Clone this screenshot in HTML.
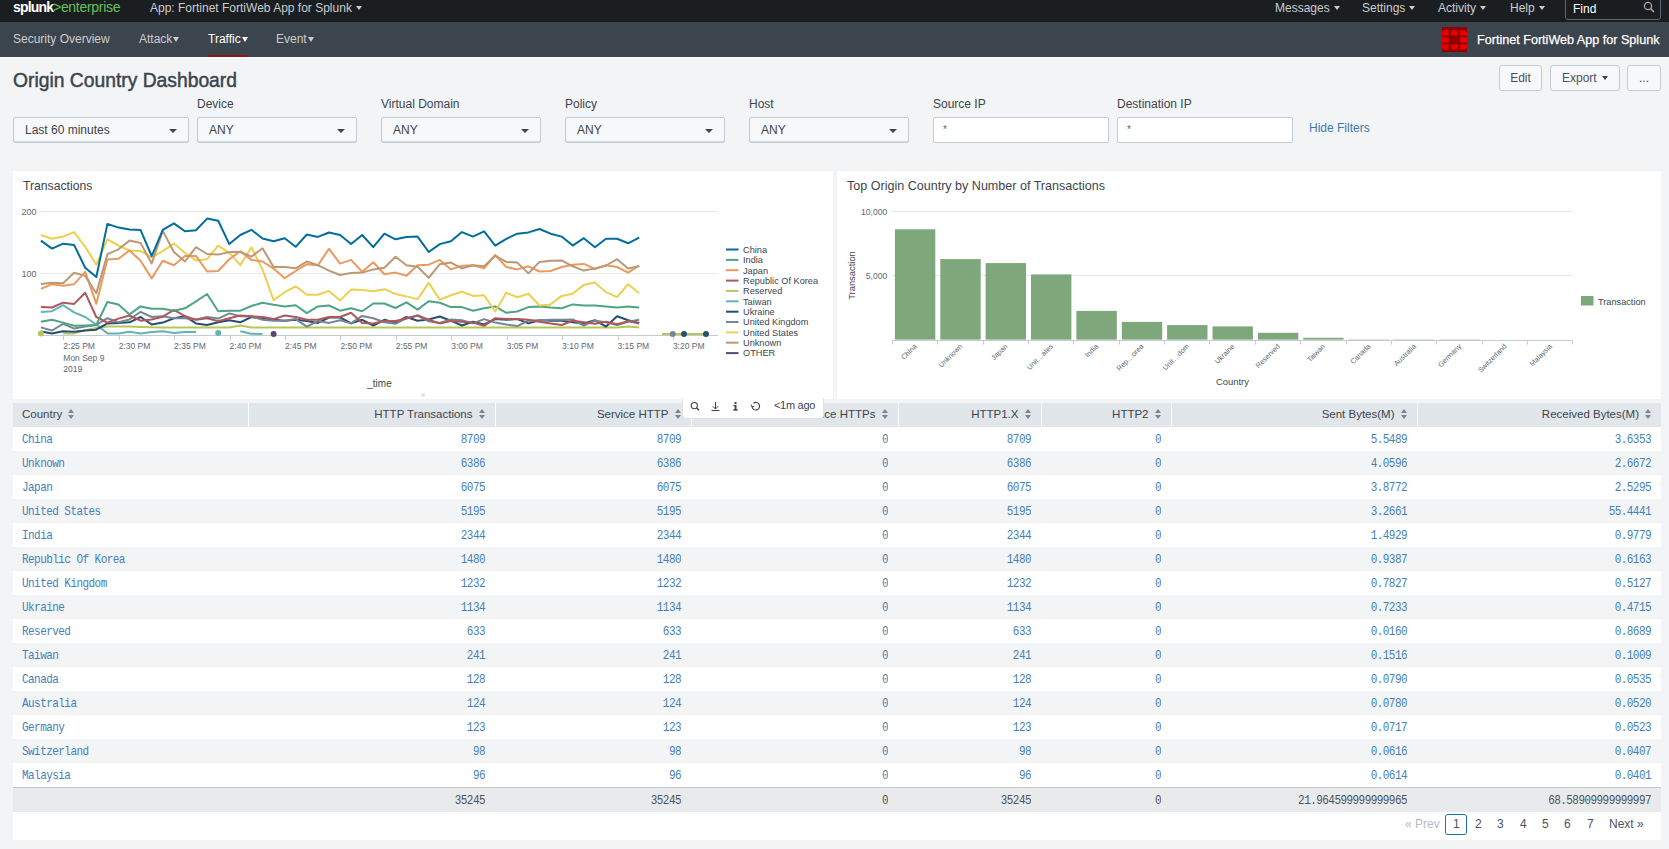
<!DOCTYPE html>
<html><head><meta charset="utf-8">
<style>
*{box-sizing:border-box;margin:0;padding:0}
html,body{width:1669px;height:849px;overflow:hidden;background:#f2f4f5;font-family:"Liberation Sans",sans-serif;color:#3c444d}
.a{position:absolute;white-space:nowrap}
#top{position:absolute;left:0;top:0;width:1669px;height:22px;background:#1a1e21}
#nav{position:absolute;left:0;top:22px;width:1669px;height:35px;background:#3c444d}
#navline{position:absolute;left:0;top:57px;width:1669px;height:1px;background:#fff}
.tt{color:#ccc;font-size:12px;top:1px}
.car{display:inline-block;width:0;height:0;border-left:3.3px solid transparent;border-right:3.3px solid transparent;border-top:4.5px solid currentColor;vertical-align:middle;margin-left:4px;position:relative;top:-1px}
.nv{color:#ccc;font-size:12px;top:32px}
.nv .car{border-left-width:3.7px;border-right-width:3.7px;border-top-width:5px;top:0}
.lbl{font-size:12px;top:97px;color:#3c444d}
.dd{position:absolute;top:117px;height:26px;border:1px solid #c3cbd4;border-radius:2px;background:#f7f8fa;font-size:12px;color:#3c444d;padding:5px 0 0 11px;box-shadow:inset 0 -1px 0 #d6dbe1}
.dd i{position:absolute;right:11px;top:11px;width:0;height:0;border-left:4px solid transparent;border-right:4px solid transparent;border-top:4px solid #3c444d}
.ti{position:absolute;top:117px;height:26px;border:1px solid #c3cbd4;border-radius:2px;background:#fff;font-size:10px;color:#5c6773;padding:6px 0 0 9px}
.btn{position:absolute;top:65px;height:26px;border:1px solid #c3cbd4;border-radius:3px;background:#f7f8fa;font-size:12px;color:#4a535c;text-align:center;padding-top:5px}
.panel{position:absolute;background:#fff}
.ptitle{font-size:12px;color:#3c444d}
table{position:absolute;left:13px;top:403px;width:1648px;border-collapse:collapse;table-layout:fixed}
th{height:24px;background:#e1e6eb;font-weight:normal;font-size:11.5px;color:#3c444d;text-align:right;padding:0 10px 2px 0;border-left:1px solid #fff;white-space:nowrap;overflow:hidden}
th:first-child{text-align:left;padding-left:9px;border-left:none}
td{height:24px;padding-top:2px !important;font-family:"Liberation Mono",monospace;font-size:11px;letter-spacing:-0.55px;color:#4680b8;text-align:right;padding:0 10px 0 0;white-space:nowrap}
td:first-child{text-align:left;padding-left:9px}
td i{font-style:normal;display:inline-block;transform:scaleY(1.13);transform-origin:50% 70%}
tbody tr:nth-child(even) td{background:#f2f4f5}
tbody tr:nth-child(odd) td{background:#fff}
tfoot td{background:#e9eaeb;color:#4a535c;border-top:1px solid #c8c8c8;height:25px}
.srt{display:inline-block;width:6px;height:10px;position:relative;margin-left:6px;top:1px}
.srt:before{content:"";position:absolute;left:0;top:0;border-left:3px solid transparent;border-right:3px solid transparent;border-bottom:4px solid #7b8591}
.srt:after{content:"";position:absolute;left:0;top:6px;border-left:3px solid transparent;border-right:3px solid transparent;border-top:4px solid #7b8591}
</style></head><body>
<div id="top"></div>
<div id="nav"></div>
<div id="navline"></div>

<!-- top bar -->
<div class="a" style="left:13px;top:-1.5px;font-size:14px;font-weight:bold;color:#fff;letter-spacing:-0.8px">splunk</div><div class="a" style="left:53px;top:-1.5px;font-size:14px;color:#65c15a;letter-spacing:-0.3px">&gt;enterprise</div>
<div class="a tt" style="left:150px">App: Fortinet FortiWeb App for Splunk<span class="car"></span></div>
<div class="a tt" style="left:1275px">Messages<span class="car"></span></div>
<div class="a tt" style="left:1362px">Settings<span class="car"></span></div>
<div class="a tt" style="left:1438px">Activity<span class="car"></span></div>
<div class="a tt" style="left:1510px">Help<span class="car"></span></div>
<div class="a" style="left:1565px;top:-4px;width:96px;height:24px;border:1px solid #5c6773;border-radius:3px;background:#1a1c20"></div><svg class="a" style="left:1640px;top:0" width="20" height="16"><circle cx="8" cy="6" r="3.6" fill="none" stroke="#a0a8b0" stroke-width="1.3"/><line x1="10.6" y1="8.6" x2="14" y2="12" stroke="#a0a8b0" stroke-width="1.6"/></svg>
<div class="a" style="left:1573px;top:2px;font-size:12px;color:#fff">Find</div>

<!-- nav -->
<div class="a nv" style="left:13px">Security Overview</div>
<div class="a nv" style="left:139px">Attack<span class="car" style="margin-left:1px"></span></div>
<div class="a nv" style="left:208px;color:#fff">Traffic<span class="car" style="margin-left:1px"></span></div>
<div class="a" style="left:208px;top:55px;width:39px;height:2px;background:#8f1518"></div>
<div class="a nv" style="left:276px">Event<span class="car" style="margin-left:1px"></span></div>

<svg class="a" style="left:1442px;top:27px" width="25" height="25">
<rect width="25" height="25" fill="#8c0000"/>
<path d="M0,5.5 Q0,3.3 2.2,3.3 H6.6 V8.5 H0 Z" fill="#e80000"/>
<rect x="9.2" y="3.3" width="6.7" height="5.2" fill="#e80000"/>
<path d="M18,3.3 H22.8 Q25,3.3 25,5.5 V8.5 H18 Z" fill="#e80000"/>
<rect x="0" y="10.2" width="6.6" height="5.4" fill="#e80000"/>
<rect x="18" y="10.2" width="7" height="5.4" fill="#e80000"/>
<path d="M0,17.3 H6.6 V22.4 H2.2 Q0,22.4 0,20.2 Z" fill="#e80000"/>
<rect x="9.2" y="17.3" width="6.7" height="5.1" fill="#e80000"/>
<path d="M18,17.3 H25 V20.2 Q25,22.4 22.8,22.4 H18 Z" fill="#e80000"/>
</svg>
<div class="a" style="left:1477px;top:32.5px;font-size:12.6px;color:#fff;-webkit-text-stroke:0.25px #fff">Fortinet FortiWeb App for Splunk</div>

<!-- title -->
<div class="a" style="left:13px;top:69.5px;font-size:19.3px;color:#3c444d;-webkit-text-stroke:0.45px #3c444d">Origin Country Dashboard</div>
<div class="btn" style="left:1499px;width:43px">Edit</div>
<div class="btn" style="left:1550px;width:70px;text-align:left;padding-left:11px">Export<i style="position:absolute;right:11px;top:10px;border-left:3.5px solid transparent;border-right:3.5px solid transparent;border-top:4px solid #3c444d"></i></div>
<div class="btn" style="left:1627px;width:34px">...</div>

<!-- filters -->
<div class="a lbl" style="left:197px">Device</div>
<div class="a lbl" style="left:381px">Virtual Domain</div>
<div class="a lbl" style="left:565px">Policy</div>
<div class="a lbl" style="left:749px">Host</div>
<div class="a lbl" style="left:933px">Source IP</div>
<div class="a lbl" style="left:1117px">Destination IP</div>
<div class="dd" style="left:13px;width:176px">Last 60 minutes<i></i></div>
<div class="dd" style="left:197px;width:160px">ANY<i></i></div>
<div class="dd" style="left:381px;width:160px">ANY<i></i></div>
<div class="dd" style="left:565px;width:160px">ANY<i></i></div>
<div class="dd" style="left:749px;width:160px">ANY<i></i></div>
<div class="ti" style="left:933px;width:176px">*</div>
<div class="ti" style="left:1117px;width:176px">*</div>
<div class="a" style="left:1309px;top:121px;font-size:12px;color:#3b79b4">Hide Filters</div>

<!-- panels -->
<div class="panel" style="left:13px;top:171px;width:820px;height:228px"></div>
<div class="panel" style="left:837px;top:171px;width:824px;height:228px"></div>
<div class="a ptitle" style="left:23px;top:179px;font-size:12.2px">Transactions</div>
<div class="a ptitle" style="left:847px;top:179px;font-size:12.55px">Top Origin Country by Number of Transactions</div>

<svg class="a" style="left:0;top:0" width="1669" height="400">
<line x1="40.5" y1="211.5" x2="718" y2="211.5" stroke="#e5e8ec" stroke-width="1"/>
<line x1="40.5" y1="273.5" x2="718" y2="273.5" stroke="#e5e8ec" stroke-width="1"/>
<line x1="40.5" y1="335.5" x2="718" y2="335.5" stroke="#c3cbd4" stroke-width="1"/>
<line x1="63.5" y1="335" x2="63.5" y2="340" stroke="#c3cbd4" stroke-width="1"/>
<text x="63.3" y="349" font-size="8.5" fill="#5c6773">2:25 PM</text>
<line x1="119.5" y1="335" x2="119.5" y2="340" stroke="#c3cbd4" stroke-width="1"/>
<text x="118.7" y="349" font-size="8.5" fill="#5c6773">2:30 PM</text>
<line x1="174.5" y1="335" x2="174.5" y2="340" stroke="#c3cbd4" stroke-width="1"/>
<text x="174.1" y="349" font-size="8.5" fill="#5c6773">2:35 PM</text>
<line x1="230.5" y1="335" x2="230.5" y2="340" stroke="#c3cbd4" stroke-width="1"/>
<text x="229.6" y="349" font-size="8.5" fill="#5c6773">2:40 PM</text>
<line x1="285.5" y1="335" x2="285.5" y2="340" stroke="#c3cbd4" stroke-width="1"/>
<text x="285.0" y="349" font-size="8.5" fill="#5c6773">2:45 PM</text>
<line x1="340.5" y1="335" x2="340.5" y2="340" stroke="#c3cbd4" stroke-width="1"/>
<text x="340.4" y="349" font-size="8.5" fill="#5c6773">2:50 PM</text>
<line x1="396.5" y1="335" x2="396.5" y2="340" stroke="#c3cbd4" stroke-width="1"/>
<text x="395.8" y="349" font-size="8.5" fill="#5c6773">2:55 PM</text>
<line x1="451.5" y1="335" x2="451.5" y2="340" stroke="#c3cbd4" stroke-width="1"/>
<text x="451.2" y="349" font-size="8.5" fill="#5c6773">3:00 PM</text>
<line x1="507.5" y1="335" x2="507.5" y2="340" stroke="#c3cbd4" stroke-width="1"/>
<text x="506.7" y="349" font-size="8.5" fill="#5c6773">3:05 PM</text>
<line x1="562.5" y1="335" x2="562.5" y2="340" stroke="#c3cbd4" stroke-width="1"/>
<text x="562.1" y="349" font-size="8.5" fill="#5c6773">3:10 PM</text>
<line x1="618.5" y1="335" x2="618.5" y2="340" stroke="#c3cbd4" stroke-width="1"/>
<text x="617.5" y="349" font-size="8.5" fill="#5c6773">3:15 PM</text>
<line x1="673.5" y1="335" x2="673.5" y2="340" stroke="#c3cbd4" stroke-width="1"/>
<text x="672.9" y="349" font-size="8.5" fill="#5c6773">3:20 PM</text>
<text x="63.3" y="361" font-size="8.5" fill="#5c6773">Mon Sep 9</text>
<text x="63.3" y="372" font-size="8.5" fill="#5c6773">2019</text>
<text x="36.5" y="215" font-size="9" fill="#5c6773" text-anchor="end">200</text>
<text x="36.5" y="277" font-size="9" fill="#5c6773" text-anchor="end">100</text>
<text x="379.5" y="386.5" font-size="10" fill="#3c444d" text-anchor="middle">_time</text>
<polyline points="63.1,333.4 74.1,333.4 85.2,330.3 96.3,327.9 107.4,326.6 118.5,326.6 129.5,326.6 140.6,326.9 151.7,327.3 162.8,327.4 173.9,327.4 184.9,327.4 196.0,327.4 207.1,327.4 218.2,327.4 229.3,327.4 240.3,325.4 251.4,327.4 262.5,327.4 273.6,327.4 284.7,327.4 295.7,327.4 306.8,327.4 317.9,327.4 329.0,327.4 340.1,327.4 351.1,327.4 362.2,327.4 373.3,327.4 384.4,327.4 395.5,327.4 406.5,327.4 417.6,327.4 428.7,327.4 439.8,327.4 450.9,327.4 461.9,327.4 473.0,327.4 484.1,327.4 495.2,327.4 506.3,327.4 517.3,327.4 528.4,327.4 539.5,327.4 550.6,327.4 561.7,327.4 572.7,327.4 583.8,327.4 594.9,327.4 606.0,327.4 617.1,327.4 628.1,326.6 639.2,327.4" fill="none" stroke="#b6c75a" stroke-width="2" stroke-linejoin="round"/>
<polyline points="40.9,312.0 52.0,311.2 63.1,305.2 74.1,312.3 85.2,317.0 96.3,324.5 107.4,333.4 118.5,333.4 129.5,331.8 140.6,333.4 151.7,332.1 162.8,331.3 173.9,332.9 184.9,332.1 196.0,332.1" fill="none" stroke="#62b3b2" stroke-width="2" stroke-linejoin="round"/>
<polyline points="240.3,331.3 251.4,333.7 262.5,334.1" fill="none" stroke="#62b3b2" stroke-width="2" stroke-linejoin="round"/>
<polyline points="40.9,331.6 52.0,333.4 63.1,331.3 74.1,331.8 85.2,330.5 96.3,329.7 107.4,323.4 118.5,322.9 129.5,322.3 140.6,317.0 151.7,324.5 162.8,322.6 173.9,318.2 184.9,316.2 196.0,323.4 207.1,325.0 218.2,322.3 229.3,320.2 240.3,322.3 251.4,317.0 262.5,318.6 273.6,319.8 284.7,320.7 295.7,319.8 306.8,321.1 317.9,322.9 329.0,317.5 340.1,317.5 351.1,323.4 362.2,319.8 373.3,325.5 384.4,319.8 395.5,322.6 406.5,317.0 417.6,320.7 428.7,319.5 439.8,316.5 450.9,320.7 461.9,325.5 473.0,321.8 484.1,324.5 495.2,319.1 506.3,319.8 517.3,319.1 528.4,323.4 539.5,320.2 550.6,320.7 561.7,320.7 572.7,322.3 583.8,323.4 594.9,320.2 606.0,326.6 617.1,316.2 628.1,320.2 639.2,322.9" fill="none" stroke="#294e70" stroke-width="2" stroke-linejoin="round"/>
<polyline points="40.9,327.4 52.0,330.5 63.1,323.8 74.1,328.6 85.2,326.6 96.3,325.0 107.4,318.2 118.5,322.3 129.5,319.5 140.6,311.8 151.7,317.0 162.8,316.2 173.9,318.2 184.9,318.2 196.0,319.5 207.1,317.0 218.2,318.6 229.3,313.4 240.3,316.2 251.4,316.5 262.5,319.8 273.6,320.7 284.7,320.7 295.7,319.1 306.8,326.6 317.9,321.1 329.0,322.9 340.1,320.2 351.1,323.4 362.2,315.9 373.3,318.2 384.4,322.3 395.5,323.8 406.5,318.2 417.6,315.5 428.7,321.3 439.8,322.9 450.9,319.5 461.9,320.2 473.0,323.4 484.1,319.1 495.2,322.6 506.3,324.5 517.3,326.1 528.4,320.7 539.5,320.2 550.6,319.8 561.7,319.8 572.7,319.5 583.8,325.5 594.9,320.7 606.0,322.3 617.1,325.0 628.1,321.8 639.2,319.8" fill="none" stroke="#738795" stroke-width="2" stroke-linejoin="round"/>
<polyline points="40.9,307.1 52.0,307.5 63.1,302.7 74.1,303.9 85.2,292.8 96.3,317.0 107.4,322.6 118.5,318.6 129.5,315.5 140.6,320.7 151.7,319.5 162.8,316.7 173.9,309.9 184.9,316.2 196.0,319.8 207.1,318.2 218.2,321.1 229.3,318.2 240.3,315.5 251.4,316.2 262.5,317.0 273.6,319.1 284.7,315.5 295.7,317.0 306.8,319.8 317.9,319.8 329.0,317.0 340.1,317.0 351.1,312.8 362.2,322.9 373.3,323.4 384.4,321.1 395.5,321.1 406.5,318.6 417.6,315.5 428.7,319.8 439.8,323.4 450.9,321.1 461.9,321.8 473.0,322.6 484.1,325.8 495.2,318.2 506.3,319.1 517.3,319.1 528.4,319.8 539.5,321.8 550.6,323.4 561.7,325.0 572.7,320.7 583.8,322.3 594.9,323.8 606.0,321.8 617.1,324.2 628.1,321.1 639.2,323.4" fill="none" stroke="#af575a" stroke-width="2" stroke-linejoin="round"/>
<polyline points="40.9,321.8 52.0,319.8 63.1,322.6 74.1,325.8 85.2,325.5 96.3,325.0 107.4,302.0 118.5,304.4 129.5,314.4 140.6,306.4 151.7,308.7 162.8,308.7 173.9,310.7 184.9,308.3 196.0,301.3 207.1,294.0 218.2,311.2 229.3,310.7 240.3,310.7 251.4,306.0 262.5,302.7 273.6,304.8 284.7,306.4 295.7,305.2 306.8,313.1 317.9,306.4 329.0,305.5 340.1,310.7 351.1,308.3 362.2,311.2 373.3,303.5 384.4,303.5 395.5,308.0 406.5,302.3 417.6,309.6 428.7,301.2 439.8,302.7 450.9,307.1 461.9,307.1 473.0,310.7 484.1,308.3 495.2,306.4 506.3,312.8 517.3,311.5 528.4,307.1 539.5,306.4 550.6,307.5 561.7,308.3 572.7,304.4 583.8,305.5 594.9,305.5 606.0,306.4 617.1,307.5 628.1,306.4 639.2,307.5" fill="none" stroke="#4fa484" stroke-width="2" stroke-linejoin="round"/>
<polyline points="40.9,235.0 52.0,238.7 63.1,236.6 74.1,232.1 85.2,246.8 96.3,264.7 107.4,239.4 118.5,245.5 129.5,250.5 140.6,251.1 151.7,257.3 162.8,251.2 173.9,243.6 184.9,252.8 196.0,260.4 207.1,259.2 218.2,245.6 229.3,252.8 240.3,265.2 251.4,247.2 262.5,269.4 273.6,300.1 284.7,292.2 295.7,286.4 306.8,294.8 317.9,294.8 329.0,290.9 340.1,300.4 351.1,289.6 362.2,290.1 373.3,291.2 384.4,289.2 395.5,294.0 406.5,296.4 417.6,299.1 428.7,282.9 439.8,299.6 450.9,295.3 461.9,291.7 473.0,295.9 484.1,295.3 495.2,311.5 506.3,292.8 517.3,297.2 528.4,293.7 539.5,305.5 550.6,304.4 561.7,295.9 572.7,293.7 583.8,284.9 594.9,282.6 606.0,292.2 617.1,297.2 628.1,284.2 639.2,293.3" fill="none" stroke="#edd051" stroke-width="2" stroke-linejoin="round"/>
<polyline points="40.9,288.9 52.0,284.2 63.1,285.8 74.1,284.2 85.2,271.9 96.3,303.7 107.4,259.5 118.5,258.8 129.5,250.5 140.6,260.7 151.7,278.4 162.8,260.7 173.9,265.2 184.9,255.9 196.0,255.9 207.1,271.5 218.2,271.0 229.3,259.2 240.3,251.2 251.4,259.9 262.5,261.5 273.6,268.6 284.7,278.2 295.7,271.0 306.8,264.2 317.9,265.2 329.0,248.8 340.1,263.6 351.1,259.9 362.2,271.8 373.3,262.3 384.4,274.2 395.5,272.6 406.5,275.8 417.6,265.2 428.7,264.7 439.8,259.9 450.9,269.4 461.9,265.8 473.0,265.2 484.1,268.3 495.2,255.1 506.3,267.0 517.3,269.4 528.4,266.3 539.5,271.5 550.6,271.0 561.7,267.0 572.7,264.7 583.8,263.9 594.9,268.9 606.0,265.2 617.1,267.0 628.1,272.6 639.2,265.5" fill="none" stroke="#ec9960" stroke-width="2" stroke-linejoin="round"/>
<polyline points="40.9,283.9 52.0,282.7 63.1,283.3 74.1,272.8 85.2,275.9 96.3,293.2 107.4,254.2 118.5,249.3 129.5,240.6 140.6,243.1 151.7,263.5 162.8,230.9 173.9,252.0 184.9,261.5 196.0,247.2 207.1,254.0 218.2,254.6 229.3,252.0 240.3,252.0 251.4,256.7 262.5,248.3 273.6,267.0 284.7,267.0 295.7,268.3 306.8,261.5 317.9,265.2 329.0,270.6 340.1,275.0 351.1,273.1 362.2,272.6 373.3,269.4 384.4,267.8 395.5,256.7 406.5,265.2 417.6,266.7 428.7,277.9 439.8,264.2 450.9,262.6 461.9,268.3 473.0,265.2 484.1,266.3 495.2,255.6 506.3,261.9 517.3,262.6 528.4,273.4 539.5,261.9 550.6,260.7 561.7,260.4 572.7,266.3 583.8,270.6 594.9,268.6 606.0,265.5 617.1,259.2 628.1,268.6 639.2,266.3" fill="none" stroke="#bd9872" stroke-width="2" stroke-linejoin="round"/>
<polyline points="40.9,240.6 52.0,248.6 63.1,243.7 74.1,244.9 85.2,267.8 96.3,277.1 107.4,223.9 118.5,227.6 129.5,229.5 140.6,230.1 151.7,256.1 162.8,229.8 173.9,223.4 184.9,231.3 196.0,230.3 207.1,218.6 218.2,220.8 229.3,244.1 240.3,235.0 251.4,229.8 262.5,238.5 273.6,241.3 284.7,238.2 295.7,246.8 306.8,234.5 317.9,236.9 329.0,232.5 340.1,235.0 351.1,244.1 362.2,235.0 373.3,247.2 384.4,233.7 395.5,239.3 406.5,236.9 417.6,236.6 428.7,252.0 439.8,244.1 450.9,241.3 461.9,232.1 473.0,236.6 484.1,231.3 495.2,245.6 506.3,238.8 517.3,233.7 528.4,232.4 539.5,229.0 550.6,233.7 561.7,236.6 572.7,245.6 583.8,238.2 594.9,247.2 606.0,238.8 617.1,238.8 628.1,243.3 639.2,237.7" fill="none" stroke="#006d9c" stroke-width="2" stroke-linejoin="round"/>
<circle cx="40.9" cy="333.5" r="3" fill="#b6c75a"/>
<circle cx="218.2" cy="333" r="3" fill="#62b3b2"/>
<circle cx="273.6" cy="334" r="3" fill="#5a4575"/>
<line x1="662" y1="334" x2="708" y2="334" stroke="#b6c75a" stroke-width="2"/>
<circle cx="672.7" cy="334" r="3" fill="#738795"/>
<circle cx="684" cy="334" r="3" fill="#294e70"/>
<circle cx="706" cy="334" r="3" fill="#294e70"/>
<line x1="726" y1="249.5" x2="738.5" y2="249.5" stroke="#006d9c" stroke-width="2"/>
<text x="743" y="252.8" font-size="9.2" fill="#3c444d">China</text>
<line x1="726" y1="259.9" x2="738.5" y2="259.9" stroke="#4fa484" stroke-width="2"/>
<text x="743" y="263.2" font-size="9.2" fill="#3c444d">India</text>
<line x1="726" y1="270.2" x2="738.5" y2="270.2" stroke="#ec9960" stroke-width="2"/>
<text x="743" y="273.5" font-size="9.2" fill="#3c444d">Japan</text>
<line x1="726" y1="280.6" x2="738.5" y2="280.6" stroke="#af575a" stroke-width="2"/>
<text x="743" y="283.9" font-size="9.2" fill="#3c444d">Republic Of Korea</text>
<line x1="726" y1="290.9" x2="738.5" y2="290.9" stroke="#b6c75a" stroke-width="2"/>
<text x="743" y="294.2" font-size="9.2" fill="#3c444d">Reserved</text>
<line x1="726" y1="301.3" x2="738.5" y2="301.3" stroke="#62b3b2" stroke-width="2"/>
<text x="743" y="304.6" font-size="9.2" fill="#3c444d">Taiwan</text>
<line x1="726" y1="311.7" x2="738.5" y2="311.7" stroke="#294e70" stroke-width="2"/>
<text x="743" y="315.0" font-size="9.2" fill="#3c444d">Ukraine</text>
<line x1="726" y1="322.0" x2="738.5" y2="322.0" stroke="#738795" stroke-width="2"/>
<text x="743" y="325.3" font-size="9.2" fill="#3c444d">United Kingdom</text>
<line x1="726" y1="332.4" x2="738.5" y2="332.4" stroke="#edd051" stroke-width="2"/>
<text x="743" y="335.7" font-size="9.2" fill="#3c444d">United States</text>
<line x1="726" y1="342.7" x2="738.5" y2="342.7" stroke="#bd9872" stroke-width="2"/>
<text x="743" y="346.0" font-size="9.2" fill="#3c444d">Unknown</text>
<line x1="726" y1="353.1" x2="738.5" y2="353.1" stroke="#5a4575" stroke-width="2"/>
<text x="743" y="356.4" font-size="9.2" fill="#3c444d">OTHER</text>
<line x1="892" y1="211.5" x2="1573" y2="211.5" stroke="#e5e8ec" stroke-width="1"/>
<line x1="892" y1="275.5" x2="1573" y2="275.5" stroke="#e5e8ec" stroke-width="1"/>
<rect x="894.9" y="229.3" width="40.4" height="110.3" fill="#7ea77b"/>
<rect x="940.3" y="259.1" width="40.4" height="80.5" fill="#7ea77b"/>
<rect x="985.6" y="263.1" width="40.4" height="76.5" fill="#7ea77b"/>
<rect x="1031.0" y="274.4" width="40.4" height="65.2" fill="#7ea77b"/>
<rect x="1076.4" y="310.9" width="40.4" height="28.7" fill="#7ea77b"/>
<rect x="1121.8" y="321.9" width="40.4" height="17.7" fill="#7ea77b"/>
<rect x="1167.1" y="325.1" width="40.4" height="14.5" fill="#7ea77b"/>
<rect x="1212.5" y="326.4" width="40.4" height="13.2" fill="#7ea77b"/>
<rect x="1257.9" y="332.8" width="40.4" height="6.8" fill="#7ea77b"/>
<rect x="1303.2" y="337.8" width="40.4" height="1.8" fill="#7ea77b"/>
<rect x="1348.6" y="339.3" width="40.4" height="0.3" fill="#7ea77b"/>
<rect x="1394.0" y="339.3" width="40.4" height="0.3" fill="#7ea77b"/>
<rect x="1439.3" y="339.3" width="40.4" height="0.3" fill="#7ea77b"/>
<rect x="1484.7" y="339.6" width="40.4" height="-0.0" fill="#7ea77b"/>
<rect x="1530.1" y="339.7" width="40.4" height="-0.1" fill="#7ea77b"/>
<line x1="892" y1="340.5" x2="1573" y2="340.5" stroke="#c3cbd4" stroke-width="1"/>
<line x1="892.5" y1="340" x2="892.5" y2="344.5" stroke="#c3cbd4" stroke-width="1"/>
<line x1="937.5" y1="340" x2="937.5" y2="344.5" stroke="#c3cbd4" stroke-width="1"/>
<line x1="983.5" y1="340" x2="983.5" y2="344.5" stroke="#c3cbd4" stroke-width="1"/>
<line x1="1028.5" y1="340" x2="1028.5" y2="344.5" stroke="#c3cbd4" stroke-width="1"/>
<line x1="1073.5" y1="340" x2="1073.5" y2="344.5" stroke="#c3cbd4" stroke-width="1"/>
<line x1="1119.5" y1="340" x2="1119.5" y2="344.5" stroke="#c3cbd4" stroke-width="1"/>
<line x1="1164.5" y1="340" x2="1164.5" y2="344.5" stroke="#c3cbd4" stroke-width="1"/>
<line x1="1209.5" y1="340" x2="1209.5" y2="344.5" stroke="#c3cbd4" stroke-width="1"/>
<line x1="1255.5" y1="340" x2="1255.5" y2="344.5" stroke="#c3cbd4" stroke-width="1"/>
<line x1="1300.5" y1="340" x2="1300.5" y2="344.5" stroke="#c3cbd4" stroke-width="1"/>
<line x1="1346.5" y1="340" x2="1346.5" y2="344.5" stroke="#c3cbd4" stroke-width="1"/>
<line x1="1391.5" y1="340" x2="1391.5" y2="344.5" stroke="#c3cbd4" stroke-width="1"/>
<line x1="1436.5" y1="340" x2="1436.5" y2="344.5" stroke="#c3cbd4" stroke-width="1"/>
<line x1="1482.5" y1="340" x2="1482.5" y2="344.5" stroke="#c3cbd4" stroke-width="1"/>
<line x1="1527.5" y1="340" x2="1527.5" y2="344.5" stroke="#c3cbd4" stroke-width="1"/>
<line x1="1572.5" y1="340" x2="1572.5" y2="344.5" stroke="#c3cbd4" stroke-width="1"/>
<text x="0" y="0" font-size="7.2" fill="#5c6773" text-anchor="end" transform="translate(917.4,346.8) rotate(-45)">China</text>
<text x="0" y="0" font-size="7.2" fill="#5c6773" text-anchor="end" transform="translate(962.8,346.8) rotate(-45)">Unknown</text>
<text x="0" y="0" font-size="7.2" fill="#5c6773" text-anchor="end" transform="translate(1008.1,346.8) rotate(-45)">Japan</text>
<text x="0" y="0" font-size="7.2" fill="#5c6773" text-anchor="end" transform="translate(1053.5,346.8) rotate(-45)">Unit…ates</text>
<text x="0" y="0" font-size="7.2" fill="#5c6773" text-anchor="end" transform="translate(1098.9,346.8) rotate(-45)">India</text>
<text x="0" y="0" font-size="7.2" fill="#5c6773" text-anchor="end" transform="translate(1144.2,346.8) rotate(-45)">Rep…orea</text>
<text x="0" y="0" font-size="7.2" fill="#5c6773" text-anchor="end" transform="translate(1189.6,346.8) rotate(-45)">Unit…dom</text>
<text x="0" y="0" font-size="7.2" fill="#5c6773" text-anchor="end" transform="translate(1235.0,346.8) rotate(-45)">Ukraine</text>
<text x="0" y="0" font-size="7.2" fill="#5c6773" text-anchor="end" transform="translate(1280.3,346.8) rotate(-45)">Reserved</text>
<text x="0" y="0" font-size="7.2" fill="#5c6773" text-anchor="end" transform="translate(1325.7,346.8) rotate(-45)">Taiwan</text>
<text x="0" y="0" font-size="7.2" fill="#5c6773" text-anchor="end" transform="translate(1371.1,346.8) rotate(-45)">Canada</text>
<text x="0" y="0" font-size="7.2" fill="#5c6773" text-anchor="end" transform="translate(1416.5,346.8) rotate(-45)">Australia</text>
<text x="0" y="0" font-size="7.2" fill="#5c6773" text-anchor="end" transform="translate(1461.8,346.8) rotate(-45)">Germany</text>
<text x="0" y="0" font-size="7.2" fill="#5c6773" text-anchor="end" transform="translate(1507.2,346.8) rotate(-45)">Switzerland</text>
<text x="0" y="0" font-size="7.2" fill="#5c6773" text-anchor="end" transform="translate(1552.6,346.8) rotate(-45)">Malaysia</text>
<text x="887.3" y="215" font-size="8.6" fill="#5c6773" text-anchor="end">10,000</text>
<text x="887.3" y="279" font-size="8.6" fill="#5c6773" text-anchor="end">5,000</text>
<text x="0" y="0" font-size="9.4" fill="#3c444d" text-anchor="middle" transform="translate(855,275.5) rotate(-90)">Transaction</text>
<text x="1232.5" y="385" font-size="9.4" fill="#3c444d" text-anchor="middle">Country</text>
<rect x="1581" y="296" width="12.5" height="9.5" fill="#7ea77b"/>
<text x="1598" y="304.8" font-size="9.2" fill="#3c444d">Transaction</text>
</svg>

<!-- table panel bg -->
<div class="panel" style="left:13px;top:403px;width:1648px;height:437px"></div>
<table>
<colgroup><col style="width:235px"><col style="width:247px"><col style="width:196px"><col style="width:207px"><col style="width:143px"><col style="width:130px"><col style="width:246px"><col style="width:244px"></colgroup>
<thead><tr><th>Country<span class="srt"></span></th><th>HTTP Transactions<span class="srt"></span></th><th>Service HTTP<span class="srt"></span></th><th>Service HTTPs<span class="srt"></span></th><th>HTTP1.X<span class="srt"></span></th><th>HTTP2<span class="srt"></span></th><th>Sent Bytes(M)<span class="srt"></span></th><th>Received Bytes(M)<span class="srt"></span></th></tr></thead>
<tbody>
<tr><td><i>China</i></td><td><i>8709</i></td><td><i>8709</i></td><td><i>0</i></td><td><i>8709</i></td><td><i>0</i></td><td><i>5.5489</i></td><td><i>3.6353</i></td></tr>
<tr><td><i>Unknown</i></td><td><i>6386</i></td><td><i>6386</i></td><td><i>0</i></td><td><i>6386</i></td><td><i>0</i></td><td><i>4.0596</i></td><td><i>2.6672</i></td></tr>
<tr><td><i>Japan</i></td><td><i>6075</i></td><td><i>6075</i></td><td><i>0</i></td><td><i>6075</i></td><td><i>0</i></td><td><i>3.8772</i></td><td><i>2.5295</i></td></tr>
<tr><td><i>United States</i></td><td><i>5195</i></td><td><i>5195</i></td><td><i>0</i></td><td><i>5195</i></td><td><i>0</i></td><td><i>3.2661</i></td><td><i>55.4441</i></td></tr>
<tr><td><i>India</i></td><td><i>2344</i></td><td><i>2344</i></td><td><i>0</i></td><td><i>2344</i></td><td><i>0</i></td><td><i>1.4929</i></td><td><i>0.9779</i></td></tr>
<tr><td><i>Republic Of Korea</i></td><td><i>1480</i></td><td><i>1480</i></td><td><i>0</i></td><td><i>1480</i></td><td><i>0</i></td><td><i>0.9387</i></td><td><i>0.6163</i></td></tr>
<tr><td><i>United Kingdom</i></td><td><i>1232</i></td><td><i>1232</i></td><td><i>0</i></td><td><i>1232</i></td><td><i>0</i></td><td><i>0.7827</i></td><td><i>0.5127</i></td></tr>
<tr><td><i>Ukraine</i></td><td><i>1134</i></td><td><i>1134</i></td><td><i>0</i></td><td><i>1134</i></td><td><i>0</i></td><td><i>0.7233</i></td><td><i>0.4715</i></td></tr>
<tr><td><i>Reserved</i></td><td><i>633</i></td><td><i>633</i></td><td><i>0</i></td><td><i>633</i></td><td><i>0</i></td><td><i>0.0160</i></td><td><i>0.8689</i></td></tr>
<tr><td><i>Taiwan</i></td><td><i>241</i></td><td><i>241</i></td><td><i>0</i></td><td><i>241</i></td><td><i>0</i></td><td><i>0.1516</i></td><td><i>0.1009</i></td></tr>
<tr><td><i>Canada</i></td><td><i>128</i></td><td><i>128</i></td><td><i>0</i></td><td><i>128</i></td><td><i>0</i></td><td><i>0.0790</i></td><td><i>0.0535</i></td></tr>
<tr><td><i>Australia</i></td><td><i>124</i></td><td><i>124</i></td><td><i>0</i></td><td><i>124</i></td><td><i>0</i></td><td><i>0.0780</i></td><td><i>0.0520</i></td></tr>
<tr><td><i>Germany</i></td><td><i>123</i></td><td><i>123</i></td><td><i>0</i></td><td><i>123</i></td><td><i>0</i></td><td><i>0.0717</i></td><td><i>0.0523</i></td></tr>
<tr><td><i>Switzerland</i></td><td><i>98</i></td><td><i>98</i></td><td><i>0</i></td><td><i>98</i></td><td><i>0</i></td><td><i>0.0616</i></td><td><i>0.0407</i></td></tr>
<tr><td><i>Malaysia</i></td><td><i>96</i></td><td><i>96</i></td><td><i>0</i></td><td><i>96</i></td><td><i>0</i></td><td><i>0.0614</i></td><td><i>0.0401</i></td></tr>
</tbody>
<tfoot><tr><td></td><td><i>35245</i></td><td><i>35245</i></td><td><i>0</i></td><td><i>35245</i></td><td><i>0</i></td><td><i>21.964599999999965</i></td><td><i>68.58909999999997</i></td></tr></tfoot>
</table>

<!-- popup -->
<div class="a" style="left:682px;top:398px;width:142px;height:21px;background:#fff;border:1px solid #dfe3e8;border-top:none;border-radius:0 0 4px 4px"></div>
<svg class="a" style="left:682px;top:398px" width="142" height="20">
<circle cx="12.3" cy="7.6" r="3.1" fill="none" stroke="#3c444d" stroke-width="1.1"/><line x1="14.5" y1="9.8" x2="17" y2="12.3" stroke="#3c444d" stroke-width="1.5"/>
<line x1="33.5" y1="4" x2="33.5" y2="11" stroke="#3c444d" stroke-width="1"/><polyline points="30.8,8.3 33.5,11 36.2,8.3" fill="none" stroke="#3c444d" stroke-width="1"/><line x1="29.5" y1="12.5" x2="37.5" y2="12.5" stroke="#3c444d" stroke-width="1"/>
<rect x="52.5" y="4" width="2" height="2" fill="#3c444d"/><rect x="52.6" y="7" width="1.9" height="5" fill="#3c444d"/><rect x="51.3" y="11.3" width="4.4" height="1.4" fill="#3c444d"/><rect x="51.3" y="7" width="1.5" height="1.2" fill="#3c444d"/>
<path d="M70,8.5 A3.8,3.8 0 1 0 71.5,5.2" fill="none" stroke="#3c444d" stroke-width="1.1"/><polyline points="69.2,6.6 70,8.8 72.3,8.2" fill="none" stroke="#3c444d" stroke-width="1"/>
</svg>
<div class="a" style="left:774px;top:399px;font-size:11px;color:#3c444d;letter-spacing:-0.3px">&lt;1m ago</div>
<svg class="a" style="left:420px;top:392px" width="6" height="6"><circle cx="3" cy="3" r="2" fill="#e1e4e8"/></svg>
<!-- pagination -->
<div class="a" style="left:1405px;top:816.5px;font-size:12px;color:#b5bcc4">« Prev</div>
<div class="a" style="left:1445px;top:814px;width:22px;height:21px;border:1px solid #1a6fad;border-radius:3px"></div>
<div class="a" style="left:1453px;top:816.5px;font-size:12px;color:#4a535c">1</div>
<div class="a" style="left:1475px;top:816.5px;font-size:12px;color:#4a535c">2</div>
<div class="a" style="left:1497px;top:816.5px;font-size:12px;color:#4a535c">3</div>
<div class="a" style="left:1520px;top:816.5px;font-size:12px;color:#4a535c">4</div>
<div class="a" style="left:1542px;top:816.5px;font-size:12px;color:#4a535c">5</div>
<div class="a" style="left:1564px;top:816.5px;font-size:12px;color:#4a535c">6</div>
<div class="a" style="left:1587px;top:816.5px;font-size:12px;color:#4a535c">7</div>
<div class="a" style="left:1609px;top:816.5px;font-size:12px;color:#4a535c">Next »</div>

</body></html>
